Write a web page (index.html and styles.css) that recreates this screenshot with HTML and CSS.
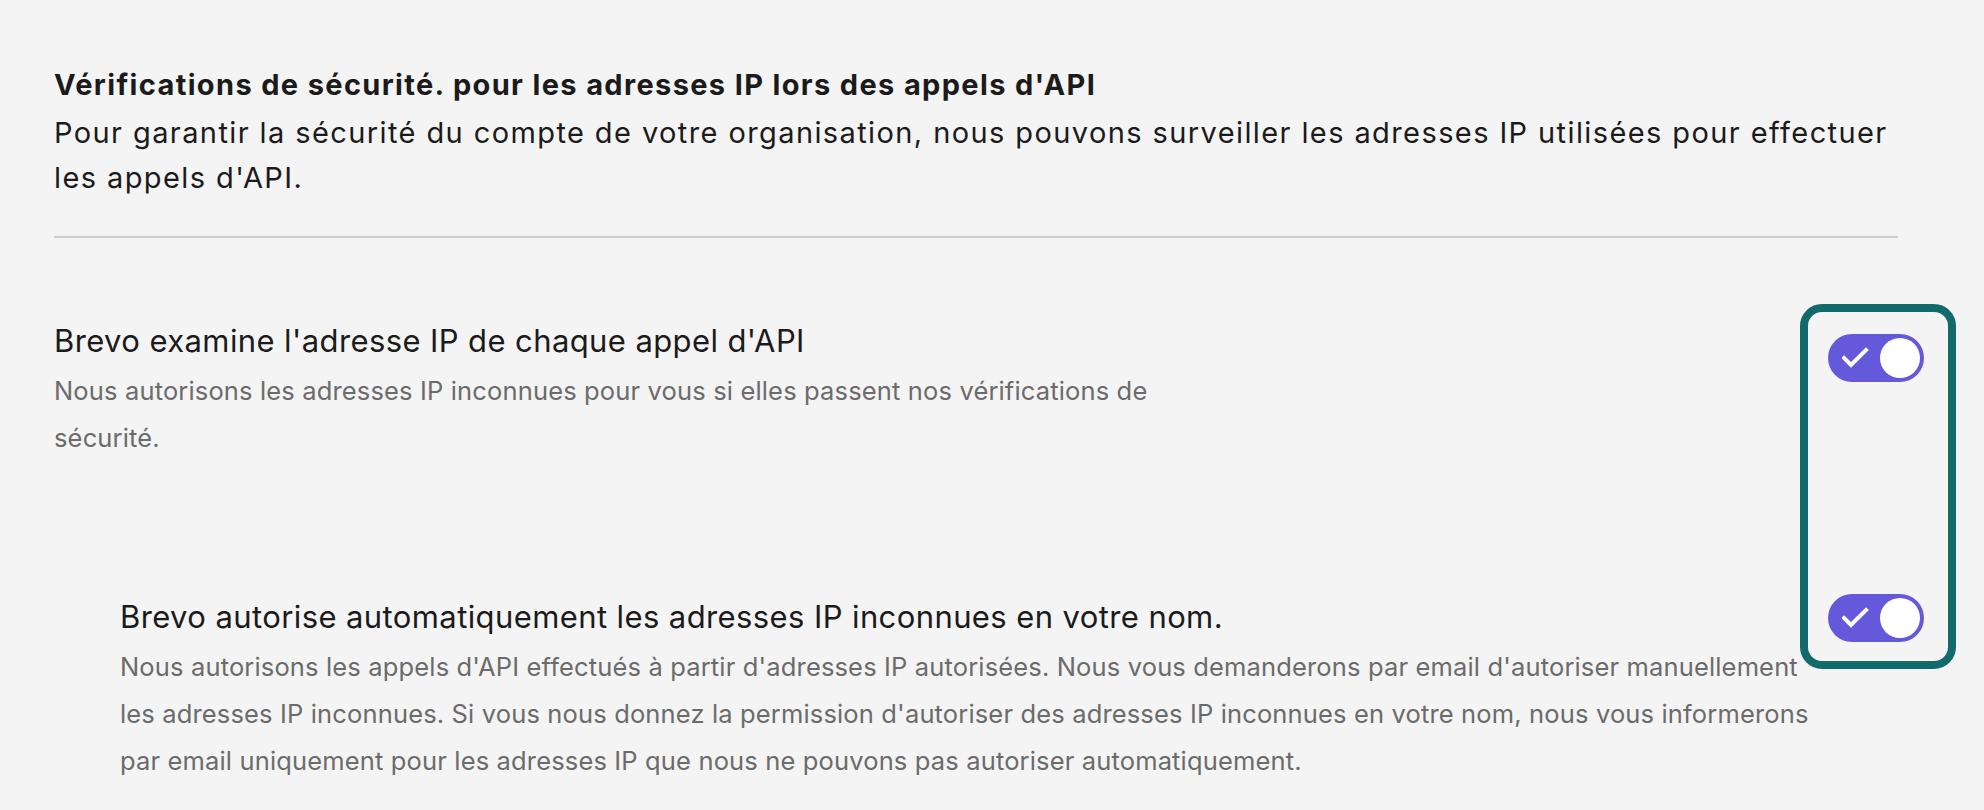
FILE: index.html
```html
<!DOCTYPE html>
<html lang="fr">
<head>
    <meta charset="utf-8">
    <title>Vérifications de sécurité - API</title>
    <link rel="stylesheet" href="styles.css">
</head>
<body>
    <div class="page">
        <div class="intro">
            <h2 class="intro-title">Vérifications de sécurité. pour les adresses IP lors des appels d'API</h2>
            <p class="intro-text">Pour garantir la sécurité du compte de votre organisation, nous pouvons surveiller les adresses IP utilisées pour effectuer les appels d'API.</p>
        </div>

        <div class="settings">
            <div class="setting setting-first">
                <div class="setting-text">
                    <div class="setting-title">Brevo examine l'adresse IP de chaque appel d'API</div>
                    <p class="setting-desc desc-short">Nous autorisons les adresses IP inconnues pour vous si elles passent nos vérifications de sécurité.</p>
                </div>
                <button class="toggle on" aria-pressed="true">
                    <svg class="check" viewBox="0 0 28 24" width="28" height="24"><path d="M2 12 L9 19 L24 4" /></svg>
                    <span class="knob"></span>
                </button>
            </div>

            <div class="setting setting-sub">
                <div class="setting-text">
                    <div class="setting-title">Brevo autorise automatiquement les adresses IP inconnues en votre nom.</div>
                    <p class="setting-desc desc-long">Nous autorisons les appels d'API effectués à partir d'adresses IP autorisées. Nous vous demanderons par email d'autoriser manuellement les adresses IP inconnues. Si vous nous donnez la permission d'autoriser des adresses IP inconnues en votre nom, nous vous informerons par email uniquement pour les adresses IP que nous ne pouvons pas autoriser automatiquement.</p>
                </div>
                <button class="toggle on" aria-pressed="true">
                    <svg class="check" viewBox="0 0 28 24" width="28" height="24"><path d="M2 12 L9 19 L24 4" /></svg>
                    <span class="knob"></span>
                </button>
            </div>

            <div class="highlight"></div>
        </div>
    </div>

    <script>
        document.querySelectorAll('.toggle').forEach(btn => {
            btn.addEventListener('click', () => {
                btn.classList.toggle('on');
                btn.setAttribute('aria-pressed', btn.classList.contains('on'));
            });
        });
    </script>
</body>
</html>
```

FILE: styles.css
```css
:root {
    --text-dark: #1b1b1b;
    --text-muted: #6b6b6b;
    --purple: #6458db;
    --teal: #126b6a;
    --page-bg: #f4f4f4;
}

body {
    margin: 0;
    background: var(--page-bg);
    font-family: Inter, 'Noto Sans', sans-serif;
    color: var(--text-dark);
}

.page {
    padding: 62px 60px 0 54px;
}

.intro {
    margin-right: 26px;
    padding-bottom: 36px;
    border-bottom: 2px solid #cccccc;
}

.intro-title {
    margin: 0;
    font-size: 29px;
    line-height: 45px;
    font-weight: 700;
    letter-spacing: 1.35px;
}

.intro-text {
    margin: 3px 0 0;
    font-size: 29px;
    line-height: 45px;
    letter-spacing: 1.4px;
}

.settings {
    position: relative;
    margin-top: 83px;
}

.setting {
    display: flex;
    justify-content: space-between;
    align-items: flex-start;
}

.setting-sub {
    margin-top: 136px;
    padding-left: 66px;
}

.setting-title {
    font-size: 31px;
    line-height: 40px;
    letter-spacing: 0.4px;
}

.setting-desc {
    margin: 6px 0 0;
    font-size: 25.5px;
    line-height: 47px;
    letter-spacing: 0.15px;
    color: var(--text-muted);
}

.desc-short {
    max-width: 1130px;
}

.desc-long {
    max-width: 1700px;
}

.toggle {
    position: relative;
    flex-shrink: 0;
    width: 96px;
    height: 48px;
    padding: 0;
    border: none;
    border-radius: 24px;
    background: #c9c9c9;
    cursor: pointer;
}

.toggle.on {
    background: var(--purple);
}

.setting-first .toggle {
    margin-top: 13px;
}

.setting-sub .toggle {
    margin-top: -3px;
}

.check {
    position: absolute;
    left: 14px;
    top: 12px;
    fill: none;
    stroke: #ffffff;
    stroke-width: 4;
    stroke-linecap: square;
}

.toggle:not(.on) .check {
    display: none;
}

.knob {
    position: absolute;
    top: 4px;
    left: 4px;
    width: 40px;
    height: 40px;
    border-radius: 50%;
    background: #ffffff;
    transition: left 0.2s ease;
}

.toggle.on .knob {
    left: 52px;
}

/* annotation frame drawn over the toggles */
.highlight {
    position: absolute;
    top: -17px;
    right: -32px;
    width: 140px;
    height: 349px;
    border: 8px solid var(--teal);
    border-radius: 22px;
    pointer-events: none;
}
```
